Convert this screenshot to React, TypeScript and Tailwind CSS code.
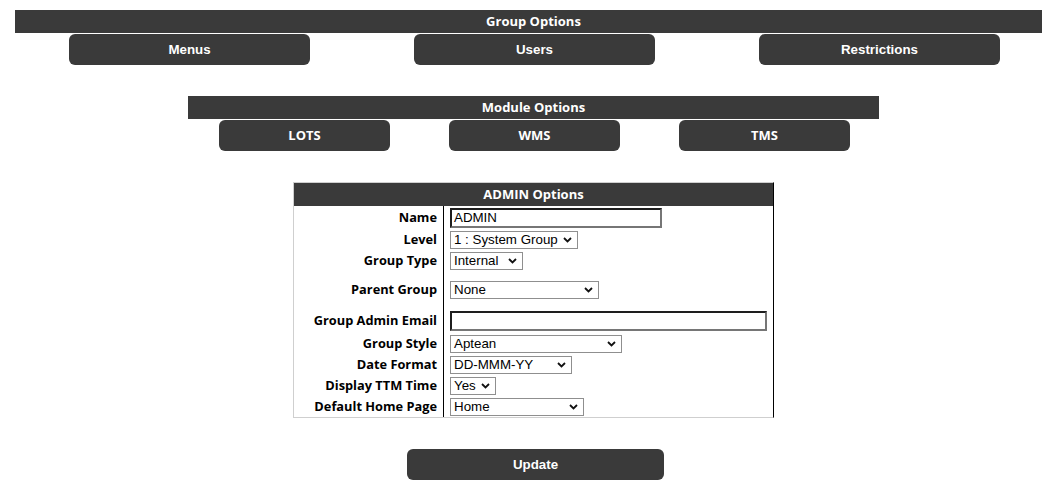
import React from 'react';

const BAR = 'bg-[#3a3a3a] text-white font-bold';

function Chevron() {
  return (
    <svg width="9" height="6" viewBox="0 0 9 6" className="shrink-0">
      <path d="M1 1 L4.5 4.5 L8 1" fill="none" stroke="#111" strokeWidth="1.8" />
    </svg>
  );
}

function Select({ value, width }: { value: string; width: string }) {
  return (
    <div
      className={`${width} h-[18px] flex items-center justify-between border border-[#8f8f8f] bg-white pl-[3px] pr-[5px] text-[13.33px] text-black font-['Liberation_Sans',Arial,sans-serif]`}
    >
      <span className="leading-none whitespace-nowrap">{value}</span>
      <Chevron />
    </div>
  );
}

function TextInput({ value, width }: { value?: string; width: string }) {
  return (
    <div
      className={`${width} h-[20px] flex items-center border-2 border-t-[#1e1e1e] border-l-[#1e1e1e] border-r-[#767676] border-b-[#767676] bg-white pl-[2px] text-[13.33px] text-black font-['Liberation_Sans',Arial,sans-serif]`}
    >
      <span className="leading-none">{value}</span>
    </div>
  );
}

const ROWS: { label: string; h: string; field: React.ReactNode }[] = [
  { label: 'Name', h: 'h-[23px]', field: <TextInput value="ADMIN" width="w-[212px]" /> },
  { label: 'Level', h: 'h-[21px]', field: <Select value="1 : System Group" width="w-[128px]" /> },
  { label: 'Group Type', h: 'h-[21px]', field: <Select value="Internal" width="w-[73px]" /> },
  { label: 'Parent Group', h: 'h-[38px]', field: <Select value="None" width="w-[149px]" /> },
  { label: 'Group Admin Email', h: 'h-[24px]', field: <TextInput width="w-[317px]" /> },
  { label: 'Group Style', h: 'h-[21px]', field: <Select value="Aptean" width="w-[172px]" /> },
  { label: 'Date Format', h: 'h-[21px]', field: <Select value="DD-MMM-YY" width="w-[122px]" /> },
  { label: 'Display TTM Time', h: 'h-[21px]', field: <Select value="Yes" width="w-[46px]" /> },
  { label: 'Default Home Page', h: 'h-[21px]', field: <Select value="Home" width="w-[134px]" /> },
];

export default function App() {
  return (
    <div className="w-[1057px] h-[491px] bg-white pt-[10px] font-['Open_Sans',sans-serif]">
      {/* Group Options */}
      <div className="mx-[15px]">
        <div className={`${BAR} h-[23px] flex items-center justify-center pl-[10px] text-[13px]`}>
          Group Options
        </div>
        <div className="flex gap-[104px] pl-[54px] pt-[1px]">
          {['Menus', 'Users', 'Restrictions'].map((t) => (
            <div
              key={t}
              className={`${BAR} w-[241px] h-[31px] rounded-[6px] flex items-center justify-center text-[13.33px] font-['Liberation_Sans',Arial,sans-serif]`}
            >
              {t}
            </div>
          ))}
        </div>
      </div>

      {/* Module Options */}
      <div className="ml-[188px] w-[691px] mt-[31px]">
        <div className={`${BAR} h-[23px] flex items-center justify-center text-[13px]`}>
          Module Options
        </div>
        <div className="flex gap-[59px] pl-[31px] pt-[1px]">
          {['LOTS', 'WMS', 'TMS'].map((t) => (
            <div
              key={t}
              className={`${BAR} w-[171px] h-[31px] rounded-[6px] flex items-center justify-center text-[13px]`}
            >
              {t}
            </div>
          ))}
        </div>
      </div>

      {/* ADMIN Options */}
      <div className="ml-[293px] w-[481px] mt-[31px] border border-[#cfcfcf] border-r-black">
        <div className={`${BAR} h-[23px] flex items-center justify-center text-[13px]`}>
          ADMIN Options
        </div>
        {ROWS.map((r) => (
          <div key={r.label} className={`flex ${r.h}`}>
            <div className="w-[150px] border-r border-black flex items-center justify-end pr-[6px] text-[12.8px] font-bold text-black whitespace-nowrap">
              {r.label}
            </div>
            <div className="flex-1 flex items-center pl-[6px]">{r.field}</div>
          </div>
        ))}
      </div>

      {/* Update */}
      <div className="flex justify-center mt-[31px] pl-[14px]">
        <div
          className={`${BAR} w-[257px] h-[31px] rounded-[6px] flex items-center justify-center text-[13.33px] font-['Liberation_Sans',Arial,sans-serif]`}
        >
          Update
        </div>
      </div>
    </div>
  );
}
